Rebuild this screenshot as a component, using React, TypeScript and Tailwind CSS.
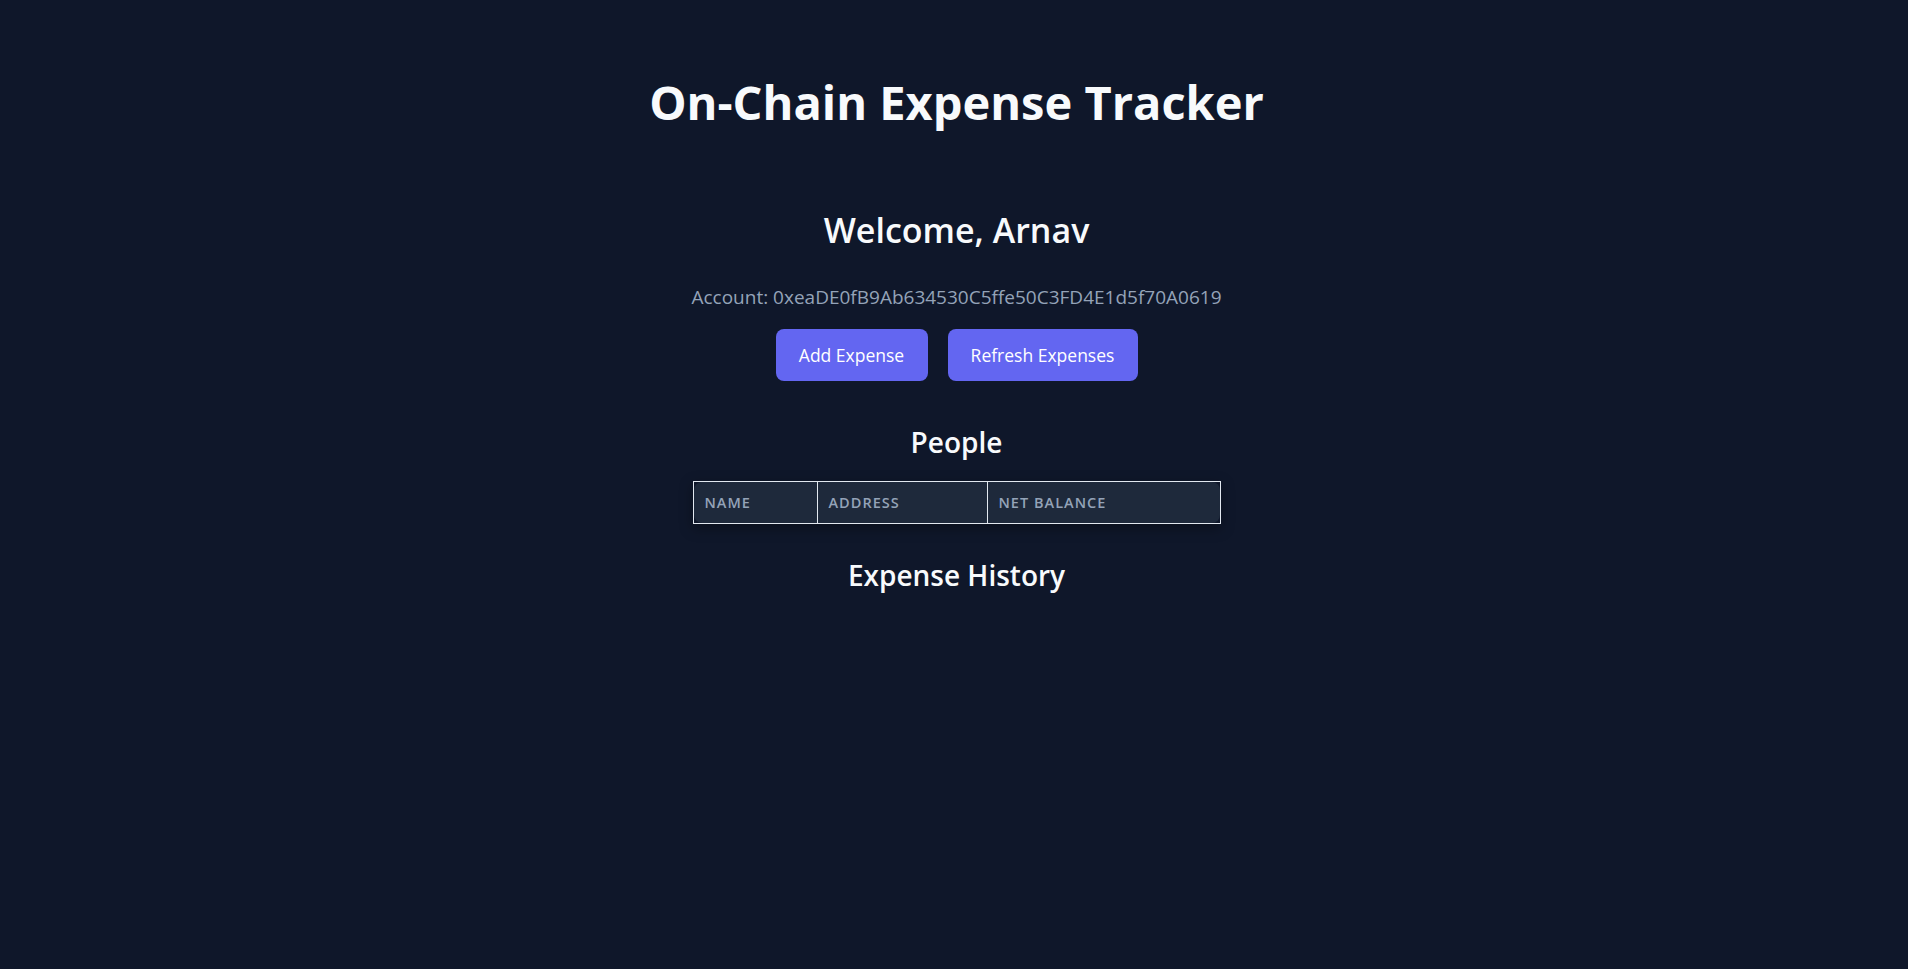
import React from "react";

export default function App() {
  return (
    <div
      className="min-h-screen w-full bg-[#0f172a] text-[#f8fafc]"
      style={{ fontFamily: '"Open Sans", "Noto Sans", sans-serif' }}
    >
      <div className="flex flex-col items-center pl-[5px] pt-[74px]">
        <h1 className="text-[47px] leading-[56px] font-bold">On-Chain Expense Tracker</h1>

        <h2 className="mt-[78px] text-[34px] leading-[44px] font-semibold">Welcome, Arnav</h2>

        <p className="mt-[31px] text-[19px] leading-[28px] text-[#94a3b8]">
          Account: 0xeaDE0fB9Ab634530C5ffe50C3FD4E1d5f70A0619
        </p>

        <div className="mt-[18px] flex gap-[20px]">
          <button className="h-[52px] w-[152px] rounded-lg bg-[#6366f1] text-[17.5px] text-white">
            Add Expense
          </button>
          <button className="h-[52px] w-[190px] rounded-lg bg-[#6366f1] text-[17.5px] text-white">
            Refresh Expenses
          </button>
        </div>

        <h3 className="mt-[43px] text-[28px] leading-[36px] font-semibold">People</h3>

        <div className="mt-[21px] w-[528px] border border-[#e2e8f0] shadow-[0_4px_14px_rgba(0,0,0,0.35)]">
          <div className="flex h-[41px] rounded-lg bg-[#1e293b] text-[14.5px] font-semibold uppercase tracking-[0.07em] text-[#94a3b8]">
            <div className="flex w-[124px] items-center border-r border-[#e2e8f0] pl-[11px]">Name</div>
            <div className="flex w-[170px] items-center border-r border-[#e2e8f0] pl-[11px]">Address</div>
            <div className="flex flex-1 items-center pl-[11px]">Net Balance</div>
          </div>
        </div>

        <h3 className="mt-[33px] text-[28px] leading-[36px] font-semibold">Expense History</h3>
      </div>
    </div>
  );
}
